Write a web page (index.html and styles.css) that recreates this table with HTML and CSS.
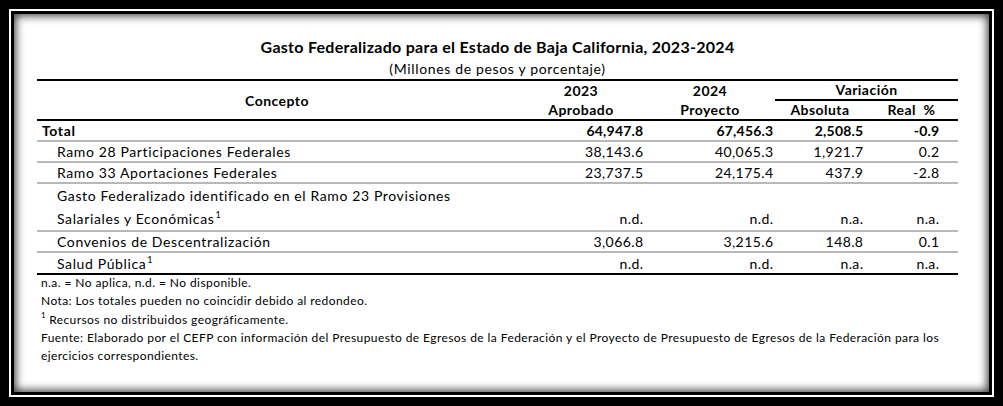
FILE: index.html
```html
<!DOCTYPE html>
<html lang="es">
<head>
<meta charset="utf-8">
<title>Gasto Federalizado Baja California</title>
<link rel="stylesheet" href="styles.css">
</head>
<body>
<div class="frame">
  <div class="ring">
    <div class="ring2">
      <div class="panel">
        <h1 class="title">Gasto Federalizado para el Estado de Baja California, 2023-2024</h1>
        <p class="subtitle">(Millones de pesos y porcentaje)</p>
        <table class="data">
          <colgroup>
            <col class="c-concepto">
            <col class="c-2023">
            <col class="c-2024">
            <col class="c-abs">
            <col class="c-real">
          </colgroup>
          <thead>
            <tr class="hrow1">
              <th rowspan="2" class="concepto">Concepto</th>
              <th>2023</th>
              <th>2024</th>
              <th colspan="2" class="var"><span>Variación</span></th>
            </tr>
            <tr class="hrow2">
              <th>Aprobado</th>
              <th>Proyecto</th>
              <th>Absoluta</th>
              <th>Real&nbsp; %</th>
            </tr>
          </thead>
          <tbody>
            <tr class="total">
              <td class="label">Total</td>
              <td class="num">64,947.8</td>
              <td class="num">67,456.3</td>
              <td class="num">2,508.5</td>
              <td class="num real">-0.9</td>
            </tr>
            <tr>
              <td class="label sub">Ramo 28 Participaciones Federales</td>
              <td class="num">38,143.6</td>
              <td class="num">40,065.3</td>
              <td class="num">1,921.7</td>
              <td class="num real">0.2</td>
            </tr>
            <tr>
              <td class="label sub">Ramo 33 Aportaciones Federales</td>
              <td class="num">23,737.5</td>
              <td class="num">24,175.4</td>
              <td class="num">437.9</td>
              <td class="num real">-2.8</td>
            </tr>
            <tr class="tall">
              <td class="label sub">Gasto Federalizado identificado en el Ramo 23 Provisiones<br>Salariales y Económicas<sup>1</sup></td>
              <td class="num">n.d.</td>
              <td class="num">n.d.</td>
              <td class="num">n.a.</td>
              <td class="num real">n.a.</td>
            </tr>
            <tr>
              <td class="label sub">Convenios de Descentralización</td>
              <td class="num">3,066.8</td>
              <td class="num">3,215.6</td>
              <td class="num">148.8</td>
              <td class="num real">0.1</td>
            </tr>
            <tr class="last">
              <td class="label sub">Salud Pública<sup>1</sup></td>
              <td class="num">n.d.</td>
              <td class="num">n.d.</td>
              <td class="num">n.a.</td>
              <td class="num real">n.a.</td>
            </tr>
          </tbody>
        </table>
        <div class="notes">
          <p>n.a. = No aplica, n.d. = No disponible.</p>
          <p>Nota: Los totales pueden no coincidir debido al redondeo.</p>
          <p><sup>1</sup> Recursos no distribuidos geográficamente.</p>
          <p>Fuente: Elaborado por el CEFP con información del Presupuesto de Egresos de la Federación y el Proyecto de Presupuesto de Egresos de la Federación para los ejercicios correspondientes.</p>
        </div>
      </div>
    </div>
  </div>
</div>
</body>
</html>
```

FILE: styles.css
```css
* { box-sizing: border-box; }

html, body {
  margin: 0;
  padding: 0;
  background: #000;
}

body {
  font-family: Lato, "Liberation Sans", sans-serif;
  color: #000;
}

.frame {
  width: 1003px;
  height: 406px;
  padding: 9px;
  background: #000;
}

.ring {
  height: 100%;
  border: 2px solid #fff;
}

.ring2 {
  height: 100%;
  border: 3px solid #000;
}

.panel {
  height: 100%;
  background: #fff;
  box-shadow: inset 0 0 9px 2px rgba(0, 0, 0, 0.75);
  padding: 22px 31px 0 23px;
}

.title {
  margin: 0;
  font-size: 16px;
  font-weight: 700;
  letter-spacing: 0.28px;
  line-height: 22px;
  text-align: center;
}

.subtitle {
  margin: 0;
  font-size: 14px;
  letter-spacing: 0.65px;
  line-height: 21px;
  text-align: center;
}

.data {
  width: 921px;
  border-collapse: collapse;
  table-layout: fixed;
  font-size: 14px;
  border-top: 2px solid #000;
  border-bottom: 2px solid #000;
}

.c-concepto { width: 480px; }
.c-2023 { width: 128px; }
.c-2024 { width: 130px; }
.c-abs { width: 90px; }
.c-real { width: 93px; }

.data th {
  font-weight: 700;
  padding: 0;
  text-align: center;
  letter-spacing: 0.45px;
  line-height: 18px;
}

.hrow1 th { height: 18px; vertical-align: bottom; padding-bottom: 0; }
.hrow2 th { height: 20px; vertical-align: bottom; padding-bottom: 0; }

.data thead { border-bottom: 2px solid #000; }

.data th.concepto {
  vertical-align: middle;
  padding-top: 2px;
}

.data th.var {
  border-bottom: 2px solid #000;
}

.data td {
  padding: 0;
  height: 19px;
  line-height: 19px;
  border-bottom: 2px solid #b8b8b8;
  vertical-align: bottom;
}

.data tr.last td {
  height: 22px;
  border-bottom: none;
}

.data tr.tall td {
  height: 44px;
  line-height: 23px;
}

.label {
  padding-left: 5px !important;
  letter-spacing: 0.62px;
}

.label.sub { padding-left: 20px !important; }

.num {
  text-align: right;
  letter-spacing: 0.4px;
  padding-right: 1.6px !important;
}

.num.real { padding-right: 18.6px !important; }

.total td { font-weight: 700; }

.total td.num {
  letter-spacing: 0.2px;
}

sup {
  font-size: 9px;
  line-height: 0;
  vertical-align: 6px;
  margin-left: 1px;
  letter-spacing: 0;
}

.notes {
  margin-top: -1px;
  padding-left: 4px;
  font-size: 12px;
  letter-spacing: 0.42px;
  line-height: 18.3px;
}

.notes p { margin: 0; }

.notes sup { font-size: 8px; margin-left: 0; }
```
